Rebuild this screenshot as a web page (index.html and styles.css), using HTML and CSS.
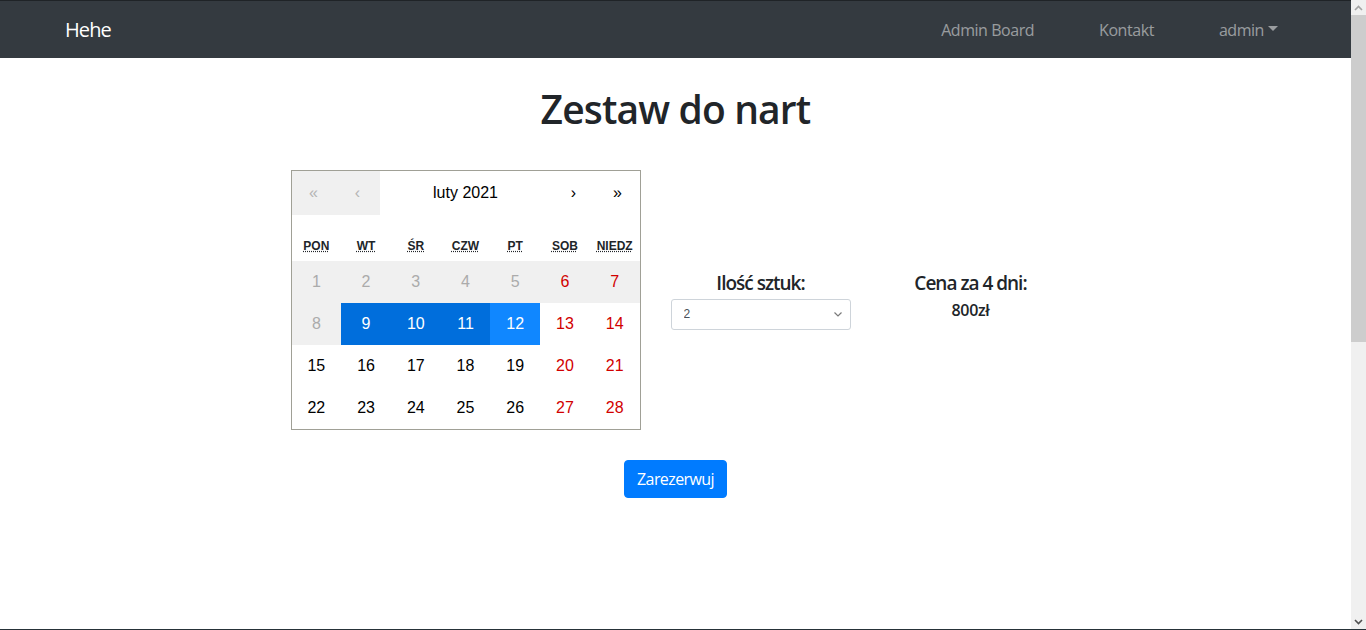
FILE: index.html
```html
<!DOCTYPE html>
<html lang="pl">
<head>
<meta charset="utf-8">
<title>Zestaw do nart</title>
<link rel="stylesheet" href="styles.css">
</head>
<body>
<div class="screen">
  <div class="window">
    <div class="viewport">
      <nav class="navbar">
        <a class="brand" href="#">Hehe</a>
        <ul class="nav-links">
          <li><a href="#">Admin Board</a></li>
          <li><a href="#">Kontakt</a></li>
          <li><a href="#" class="dropdown">admin<span class="caret"></span></a></li>
        </ul>
      </nav>
      <main class="content">
        <h1 class="title">Zestaw do nart</h1>
        <div class="booking">
          <div class="calendar">
            <div class="cal-nav">
              <button class="cal-arrow" disabled>«</button>
              <button class="cal-arrow" disabled>‹</button>
              <button class="cal-label">luty 2021</button>
              <button class="cal-arrow">›</button>
              <button class="cal-arrow">»</button>
            </div>
            <div class="cal-weekdays">
              <div><abbr title="poniedziałek">pon</abbr></div>
              <div><abbr title="wtorek">wt</abbr></div>
              <div><abbr title="środa">śr</abbr></div>
              <div><abbr title="czwartek">czw</abbr></div>
              <div><abbr title="piątek">pt</abbr></div>
              <div><abbr title="sobota">sob</abbr></div>
              <div><abbr title="niedziela">niedz</abbr></div>
            </div>
            <div class="cal-days">
              <button class="tile" disabled>1</button>
              <button class="tile" disabled>2</button>
              <button class="tile" disabled>3</button>
              <button class="tile" disabled>4</button>
              <button class="tile" disabled>5</button>
              <button class="tile weekend" disabled>6</button>
              <button class="tile weekend" disabled>7</button>
              <button class="tile" disabled>8</button>
              <button class="tile active">9</button>
              <button class="tile active">10</button>
              <button class="tile active">11</button>
              <button class="tile active focus">12</button>
              <button class="tile weekend">13</button>
              <button class="tile weekend">14</button>
              <button class="tile">15</button>
              <button class="tile">16</button>
              <button class="tile">17</button>
              <button class="tile">18</button>
              <button class="tile">19</button>
              <button class="tile weekend">20</button>
              <button class="tile weekend">21</button>
              <button class="tile">22</button>
              <button class="tile">23</button>
              <button class="tile">24</button>
              <button class="tile">25</button>
              <button class="tile">26</button>
              <button class="tile weekend">27</button>
              <button class="tile weekend">28</button>
            </div>
          </div>
          <div class="field">
            <label class="field-label" for="qty">Ilość sztuk:</label>
            <div class="select-wrap">
              <select id="qty" class="select">
                <option>1</option>
                <option selected>2</option>
                <option>3</option>
              </select>
              <svg class="chevron" width="8" height="5" viewBox="0 0 8 5"><path d="M0.5 0.5 L4 4 L7.5 0.5" fill="none" stroke="#7a7a7a" stroke-width="1.2"/></svg>
            </div>
          </div>
          <div class="price">
            <h5 class="price-label">Cena za 4 dni:</h5>
            <p class="price-value">800zł</p>
          </div>
        </div>
        <div class="actions">
          <button class="btn-primary">Zarezerwuj</button>
        </div>
      </main>
    </div>
    <div class="scrollbar">
      <div class="sb-btn"><svg width="9" height="6" viewBox="0 0 9 6"><path d="M1 5 L4.5 1.5 L8 5" fill="none" stroke="#a3a3a3" stroke-width="1.6"/></svg></div>
      <div class="sb-track"><div class="sb-thumb"></div></div>
      <div class="sb-btn"><svg width="9" height="6" viewBox="0 0 9 6"><path d="M1 1 L4.5 4.5 L8 1" fill="none" stroke="#505050" stroke-width="1.6"/></svg></div>
    </div>
  </div>
  <div class="bottom-line"></div>
</div>
</body>
</html>
```

FILE: styles.css
```css
* { box-sizing: border-box; }
html, body { margin: 0; padding: 0; }
body {
  font-family: "Open Sans", "Noto Sans", sans-serif;
  color: #212529;
  background: #fff;
  overflow: hidden;
}
.screen {
  height: 630px;
  display: flex;
  flex-direction: column;
}
.window {
  flex: 1;
  display: flex;
  min-height: 0;
}
.viewport {
  flex: 1;
  min-width: 0;
  border-top: 1px solid #1f2327;
  background: #fff;
}
.bottom-line {
  height: 1px;
  background: #263238;
}

/* navbar */
.navbar {
  height: 57px;
  background: #343a40;
  display: flex;
  align-items: center;
  justify-content: space-between;
  padding: 0 73px 0 65px;
}
.brand {
  color: #fff;
  font-size: 20px;
  letter-spacing: -0.9px;
  text-decoration: none;
  line-height: 30px;
}
.nav-links {
  list-style: none;
  margin: 0;
  padding: 0;
  display: flex;
  gap: 65px;
}
.nav-links a {
  color: rgba(255, 255, 255, 0.5);
  text-decoration: none;
  font-size: 16px;
  letter-spacing: -0.45px;
  line-height: 24px;
  display: flex;
  align-items: center;
}
.caret {
  display: inline-block;
  margin-left: 4px;
  border-top: 5px solid rgba(255, 255, 255, 0.5);
  border-left: 5px solid transparent;
  border-right: 5px solid transparent;
  margin-top: -2px;
}

/* content */
.content {
  padding-top: 27px;
}
.title {
  margin: 0;
  text-align: center;
  font-size: 39px;
  font-weight: 600;
  letter-spacing: -0.85px;
  line-height: 48px;
}
.booking {
  margin-top: 37px;
  display: flex;
  justify-content: center;
  align-items: center;
  gap: 30px;
}

/* calendar */
.calendar {
  width: 350px;
  border: 1px solid #a0a096;
  font-family: "Liberation Sans", Arial, sans-serif;
  background: #fff;
}
.calendar button {
  font-family: inherit;
  border: 0;
  margin: 0;
  outline: none;
  background: none;
  color: #000;
  font-size: 16px;
}
.cal-nav {
  display: flex;
  height: 44px;
  margin-bottom: 16px;
}
.cal-arrow {
  min-width: 44px;
  padding: 0;
}
.cal-arrow:disabled {
  background: #f0f0f0;
  color: #b5b5b5;
}
.cal-label {
  flex: 1;
}
.cal-weekdays {
  display: grid;
  grid-template-columns: repeat(7, 1fr);
  text-align: center;
  text-transform: uppercase;
  font-weight: bold;
  font-size: 12px;
  line-height: 18px;
}
.cal-weekdays div {
  padding: 6px 0;
}
.cal-weekdays abbr {
  text-decoration: underline dotted;
}
.cal-days {
  display: grid;
  grid-template-columns: repeat(7, 1fr);
}
.tile {
  height: 42px;
  padding: 0;
  text-align: center;
  line-height: 16px;
}
.calendar .tile:disabled {
  background: #f0f0f0;
  color: #ababab;
}
.calendar .tile.weekend {
  color: #d10000;
}
.calendar .tile.active {
  background: #006edc;
  color: #fff;
}
.calendar .tile.focus {
  background: #1087ff;
}

/* fields */
.field, .price {
  width: 180px;
  display: flex;
  flex-direction: column;
  align-items: center;
}
.field-label {
  font-size: 19px;
  font-weight: 600;
  letter-spacing: -1px;
  line-height: 24px;
  margin-bottom: 4px;
}
.select-wrap {
  position: relative;
  width: 180px;
}
.select {
  appearance: none;
  -webkit-appearance: none;
  width: 100%;
  height: 31px;
  border: 1px solid #ced4da;
  border-radius: 3px;
  background: #fff;
  color: #495057;
  font-family: "Liberation Sans", Arial, sans-serif;
  font-size: 12px;
  padding: 0 24px 0 12px;
}
.chevron {
  position: absolute;
  right: 9px;
  top: 13px;
  pointer-events: none;
}
.price {
  padding-bottom: 8px;
}
.price-label {
  margin: 0 0 3px;
  font-size: 19px;
  font-weight: 600;
  letter-spacing: -1px;
  line-height: 24px;
}
.price-value {
  margin: 0;
  font-size: 16px;
  font-weight: 600;
  letter-spacing: -0.3px;
  line-height: 24px;
}

/* action */
.actions {
  margin-top: 30px;
  display: flex;
  justify-content: center;
}
.btn-primary {
  font-family: inherit;
  font-size: 16px;
  letter-spacing: -0.6px;
  line-height: 24px;
  padding: 6px 12px;
  color: #fff;
  background: #007bff;
  border: 1px solid #007bff;
  border-radius: 4px;
}

/* scrollbar */
.scrollbar {
  width: 15px;
  background: #f0f0f0;
  display: flex;
  flex-direction: column;
}
.sb-btn {
  height: 15px;
  display: flex;
  align-items: center;
  justify-content: center;
}
.sb-track {
  flex: 1;
}
.sb-thumb {
  height: 327px;
  background: #cdcdcd;
}
```
